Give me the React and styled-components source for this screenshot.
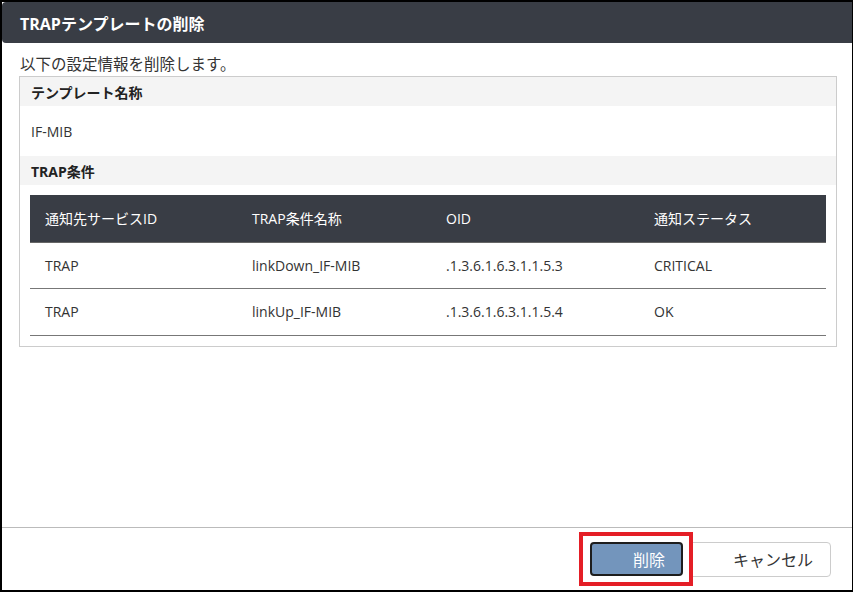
import React from 'react';
import styled, { createGlobalStyle } from 'styled-components';

const GlobalStyle = createGlobalStyle`
  html, body {
    margin: 0;
    padding: 0;
    background: #fff;
  }
  * {
    box-sizing: border-box;
  }
`;

const rows = [
  { service: 'TRAP', name: 'linkDown_IF-MIB', oid: '.1.3.6.1.6.3.1.1.5.3', status: 'CRITICAL' },
  { service: 'TRAP', name: 'linkUp_IF-MIB', oid: '.1.3.6.1.6.3.1.1.5.4', status: 'OK' },
];

const columns = [
  { label: '通知先サービスID', width: 207 },
  { label: 'TRAP条件名称', width: 194 },
  { label: 'OID', width: 208 },
  { label: '通知ステータス', width: 187 },
];

export default function App() {
  return (
    <>
      <GlobalStyle />
      <Dialog>
        <TitleBar>TRAPテンプレートの削除</TitleBar>
        <Main>
          <Intro>以下の設定情報を削除します。</Intro>
          <InfoBox>
            <SectionHead>テンプレート名称</SectionHead>
            <Value>IF-MIB</Value>
            <SectionHead>TRAP条件</SectionHead>
            <TableWrap>
              <Table>
                <colgroup>
                  {columns.map(c => <col key={c.label} style={{ width: c.width }} />)}
                </colgroup>
                <thead>
                  <tr>
                    {columns.map(c => <Th key={c.label}>{c.label}</Th>)}
                  </tr>
                </thead>
                <tbody>
                  {rows.map(r => (
                    <tr key={r.oid}>
                      <Td>{r.service}</Td>
                      <Td>{r.name}</Td>
                      <Td>{r.oid}</Td>
                      <Td>{r.status}</Td>
                    </tr>
                  ))}
                </tbody>
              </Table>
            </TableWrap>
          </InfoBox>
        </Main>
        <Footer>
          <Highlight>
            <DeleteButton>削除</DeleteButton>
          </Highlight>
          <CancelButton>キャンセル</CancelButton>
        </Footer>
      </Dialog>
    </>
  );
}

const Dialog = styled.div`
  width: 853px;
  height: 592px;
  display: flex;
  flex-direction: column;
  border-top: 2px solid #000;
  border-left: 2px solid #000;
  border-bottom: 2px solid #000;
  border-right: 1px solid #000;
  background: #fff;
  font-family: "Open Sans", "Noto Sans CJK JP", sans-serif;
  color: #333;
`;

const TitleBar = styled.div`
  height: 41px;
  flex-shrink: 0;
  display: flex;
  align-items: center;
  padding-left: 18px;
  background: #393d45;
  border-radius: 4px 0 0 4px;
  color: #fff;
  font-size: 16px;
  font-weight: 700;
`;

const Main = styled.div`
  flex: 1;
  padding: 0 15px 0 17px;
`;

const Intro = styled.div`
  height: 33px;
  padding-top: 9px;
  font-family: "Noto Sans CJK JP", sans-serif;
  font-size: 15.5px;
  line-height: 22px;
  padding-left: 1px;
`;

const InfoBox = styled.div`
  border: 1px solid #ccc;
  padding-bottom: 10px;
`;

const SectionHead = styled.div`
  height: 29px;
  display: flex;
  align-items: center;
  padding-left: 11px;
  background: #f4f4f4;
  font-size: 14px;
  font-weight: 700;
  color: #222;
`;

const Value = styled.div`
  height: 50px;
  display: flex;
  align-items: center;
  padding-left: 11px;
  font-size: 14px;
`;

const TableWrap = styled.div`
  padding: 10px 9px 0 10px;
`;

const Table = styled.table`
  width: 796px;
  border-collapse: collapse;
  table-layout: fixed;
  font-size: 14px;
`;

const Th = styled.th`
  height: 47px;
  padding: 0 0 0 15px;
  text-align: left;
  font-weight: 400;
  color: #fff;
  background: #393d45;
  border-bottom: 1px solid #666;
`;

const Td = styled.td`
  height: 46.5px;
  padding: 0 0 0 15px;
  text-align: left;
  border-bottom: 1px solid #777;
  color: #333;
`;

const Footer = styled.div`
  height: 63px;
  flex-shrink: 0;
  border-top: 1px solid #bbb;
  display: flex;
  align-items: center;
  justify-content: flex-end;
  padding-right: 21px;
`;

const Highlight = styled.div`
  position: relative;
  z-index: 1;
  border: 4px solid #e41e26;
  padding: 6px 6px 6px 7px;
  display: flex;
`;

const DeleteButton = styled.button`
  width: 93px;
  height: 34px;
  border: 2px solid #1d1d1d;
  border-radius: 4px;
  background: #7395bc;
  color: #fff;
  font-family: "Noto Sans CJK JP", sans-serif;
  font-size: 16px;
  text-align: left;
  padding: 0 0 0 41px;
`;

const CancelButton = styled.button`
  width: 142px;
  height: 35px;
  margin-left: -4px;
  border: 1px solid #ccc;
  border-radius: 4px;
  background: #fff;
  color: #333;
  font-family: "Noto Sans CJK JP", sans-serif;
  font-size: 16px;
  text-align: left;
  padding: 0 0 0 43px;
`;
